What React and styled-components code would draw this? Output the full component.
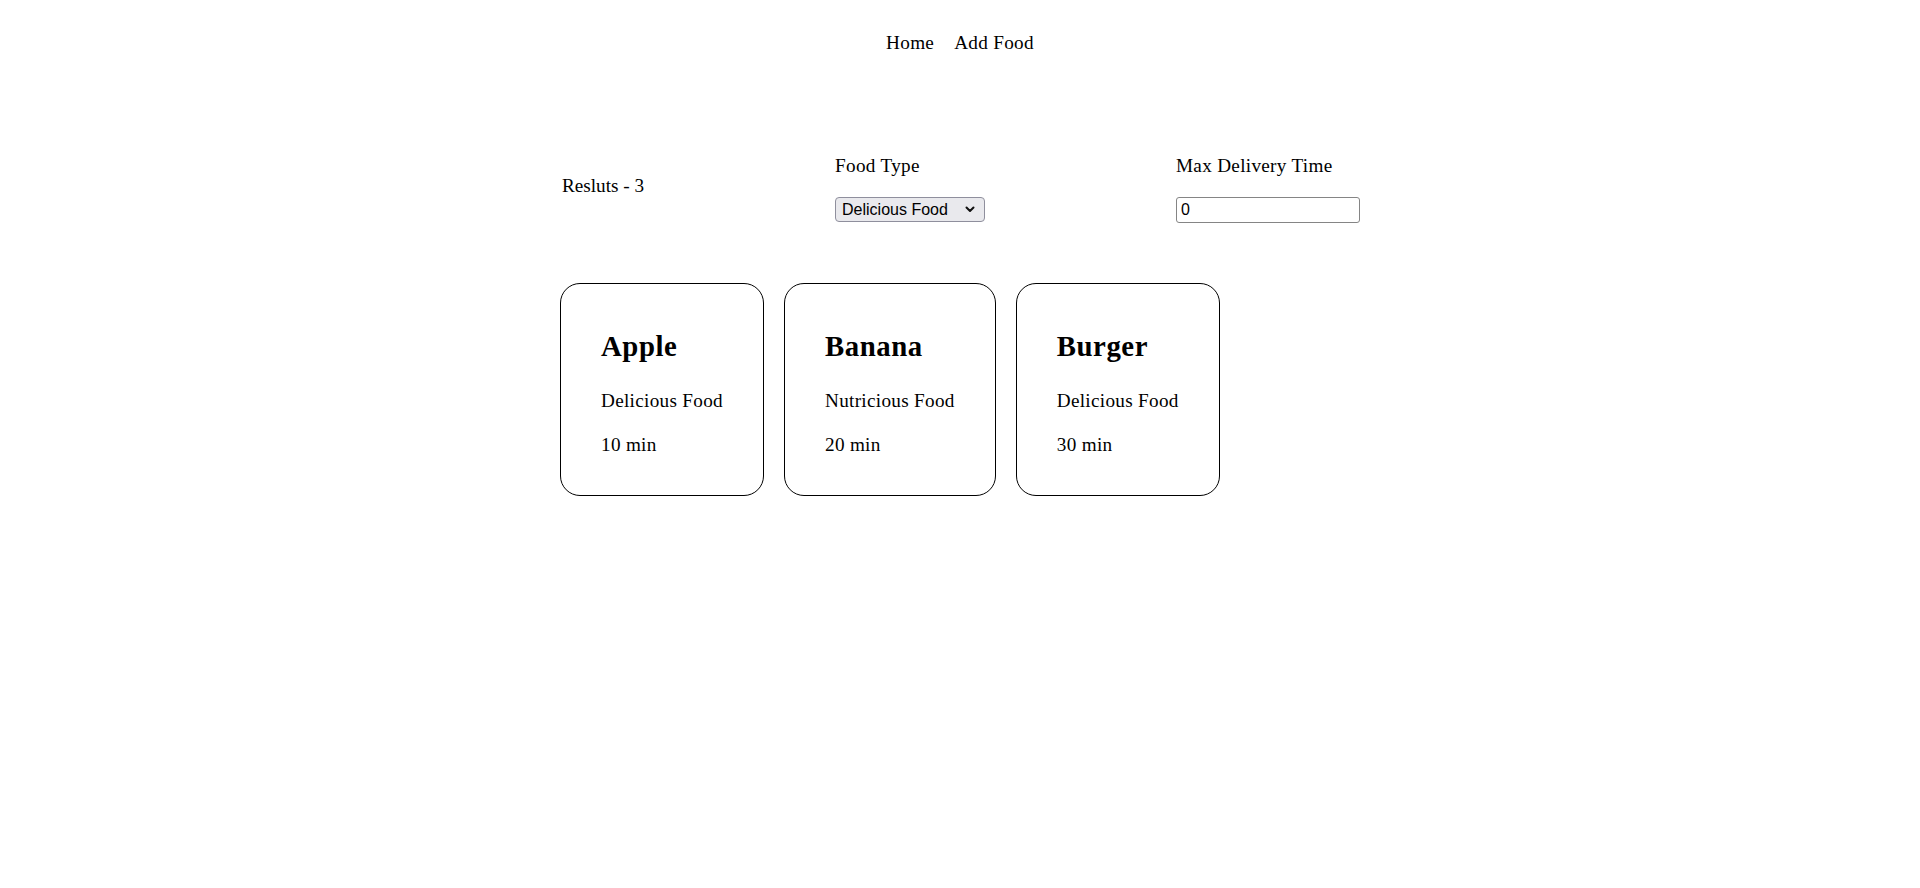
import React from "react";
import styled, { createGlobalStyle } from "styled-components";

const GlobalStyle = createGlobalStyle`
  html, body {
    margin: 0;
    padding: 0;
    background: #ffffff;
  }
  body {
    font-family: "Liberation Serif", "Times New Roman", serif;
    font-size: 19.2px;
    line-height: 22px;
    letter-spacing: 0.3px;
    color: #000000;
  }
`;

const Nav = styled.nav`
  display: flex;
  justify-content: center;
  gap: 20px;
  padding-top: 32px;
`;

const NavLink = styled.a`
  color: #000;
  text-decoration: none;
  line-height: 22px;
  cursor: pointer;
`;

const Main = styled.main`
  width: 800px;
  margin: 0 auto;
`;

const FilterRow = styled.section`
  display: flex;
  justify-content: space-between;
  align-items: flex-start;
  margin-top: 101px;
`;

const Results = styled.div`
  padding-top: 20px;
  padding-left: 2px;
  line-height: 22px;
  letter-spacing: 0;
`;

const Field = styled.div`
  display: flex;
  flex-direction: column;
  align-items: flex-start;
`;

const Label = styled.label`
  line-height: 22px;
  margin-bottom: 20px;
`;

const SelectWrap = styled.div`
  position: relative;
  width: 150px;
  height: 25px;
`;

const Select = styled.select`
  appearance: none;
  -webkit-appearance: none;
  box-sizing: border-box;
  width: 150px;
  height: 25px;
  margin: 0;
  padding: 0 24px 0 6px;
  font-family: "Liberation Sans", Arial, sans-serif;
  font-size: 16px;
  letter-spacing: 0;
  color: #000;
  background: #e9e9ed;
  border: 1px solid #8f8f9d;
  border-radius: 4px;
  outline: none;
`;

const Chevron = styled.svg`
  position: absolute;
  right: 10px;
  top: 9px;
  width: 10px;
  height: 7px;
  pointer-events: none;
`;

const NumberInput = styled.input`
  box-sizing: border-box;
  width: 184px;
  height: 26px;
  margin: 0;
  padding: 1px 4px;
  font-family: "Liberation Sans", Arial, sans-serif;
  font-size: 16px;
  letter-spacing: 0;
  color: #000;
  background: #fff;
  border: 1px solid #858585;
  border-radius: 3px;
  outline: none;
`;

const CardRow = styled.section`
  display: flex;
  flex-wrap: wrap;
  gap: 20px;
  margin-top: 60px;
`;

const Card = styled.article`
  display: flex;
  flex-direction: column;
  align-items: flex-start;
  padding: 46px 40px 39px;
  border: 1px solid #000;
  border-radius: 20px;
`;

const CardTitle = styled.h2`
  margin: 0 0 27px;
  font-size: 28.8px;
  line-height: 33px;
  font-weight: bold;
  letter-spacing: 0.55px;
`;

const CardText = styled.p`
  margin: 0 0 ${(p) => (p.$last ? "0" : "21.5px")};
  line-height: 22px;
  white-space: nowrap;
`;

const foods = [
  { name: "Apple", type: "Delicious Food", time: 10 },
  { name: "Banana", type: "Nutricious Food", time: 20 },
  { name: "Burger", type: "Delicious Food", time: 30 },
];

export default function App() {
  return (
    <>
      <GlobalStyle />
      <Nav>
        <NavLink>Home</NavLink>
        <NavLink>Add Food</NavLink>
      </Nav>
      <Main>
        <FilterRow>
          <Results>Resluts - {foods.length}</Results>
          <Field>
            <Label htmlFor="foodType">Food Type</Label>
            <SelectWrap>
              <Select id="foodType" defaultValue="Delicious Food">
                <option>Delicious Food</option>
                <option>Nutricious Food</option>
              </Select>
              <Chevron viewBox="0 0 10 7" fill="none">
                <path
                  d="M1.5 1.5 L5 5 L8.5 1.5"
                  stroke="#111"
                  strokeWidth="2"
                  strokeLinecap="round"
                  strokeLinejoin="round"
                />
              </Chevron>
            </SelectWrap>
          </Field>
          <Field>
            <Label htmlFor="maxTime">Max Delivery Time</Label>
            <NumberInput id="maxTime" type="text" defaultValue="0" />
          </Field>
        </FilterRow>
        <CardRow>
          {foods.map((f) => (
            <Card key={f.name}>
              <CardTitle>{f.name}</CardTitle>
              <CardText>{f.type}</CardText>
              <CardText $last>{f.time} min</CardText>
            </Card>
          ))}
        </CardRow>
      </Main>
    </>
  );
}
